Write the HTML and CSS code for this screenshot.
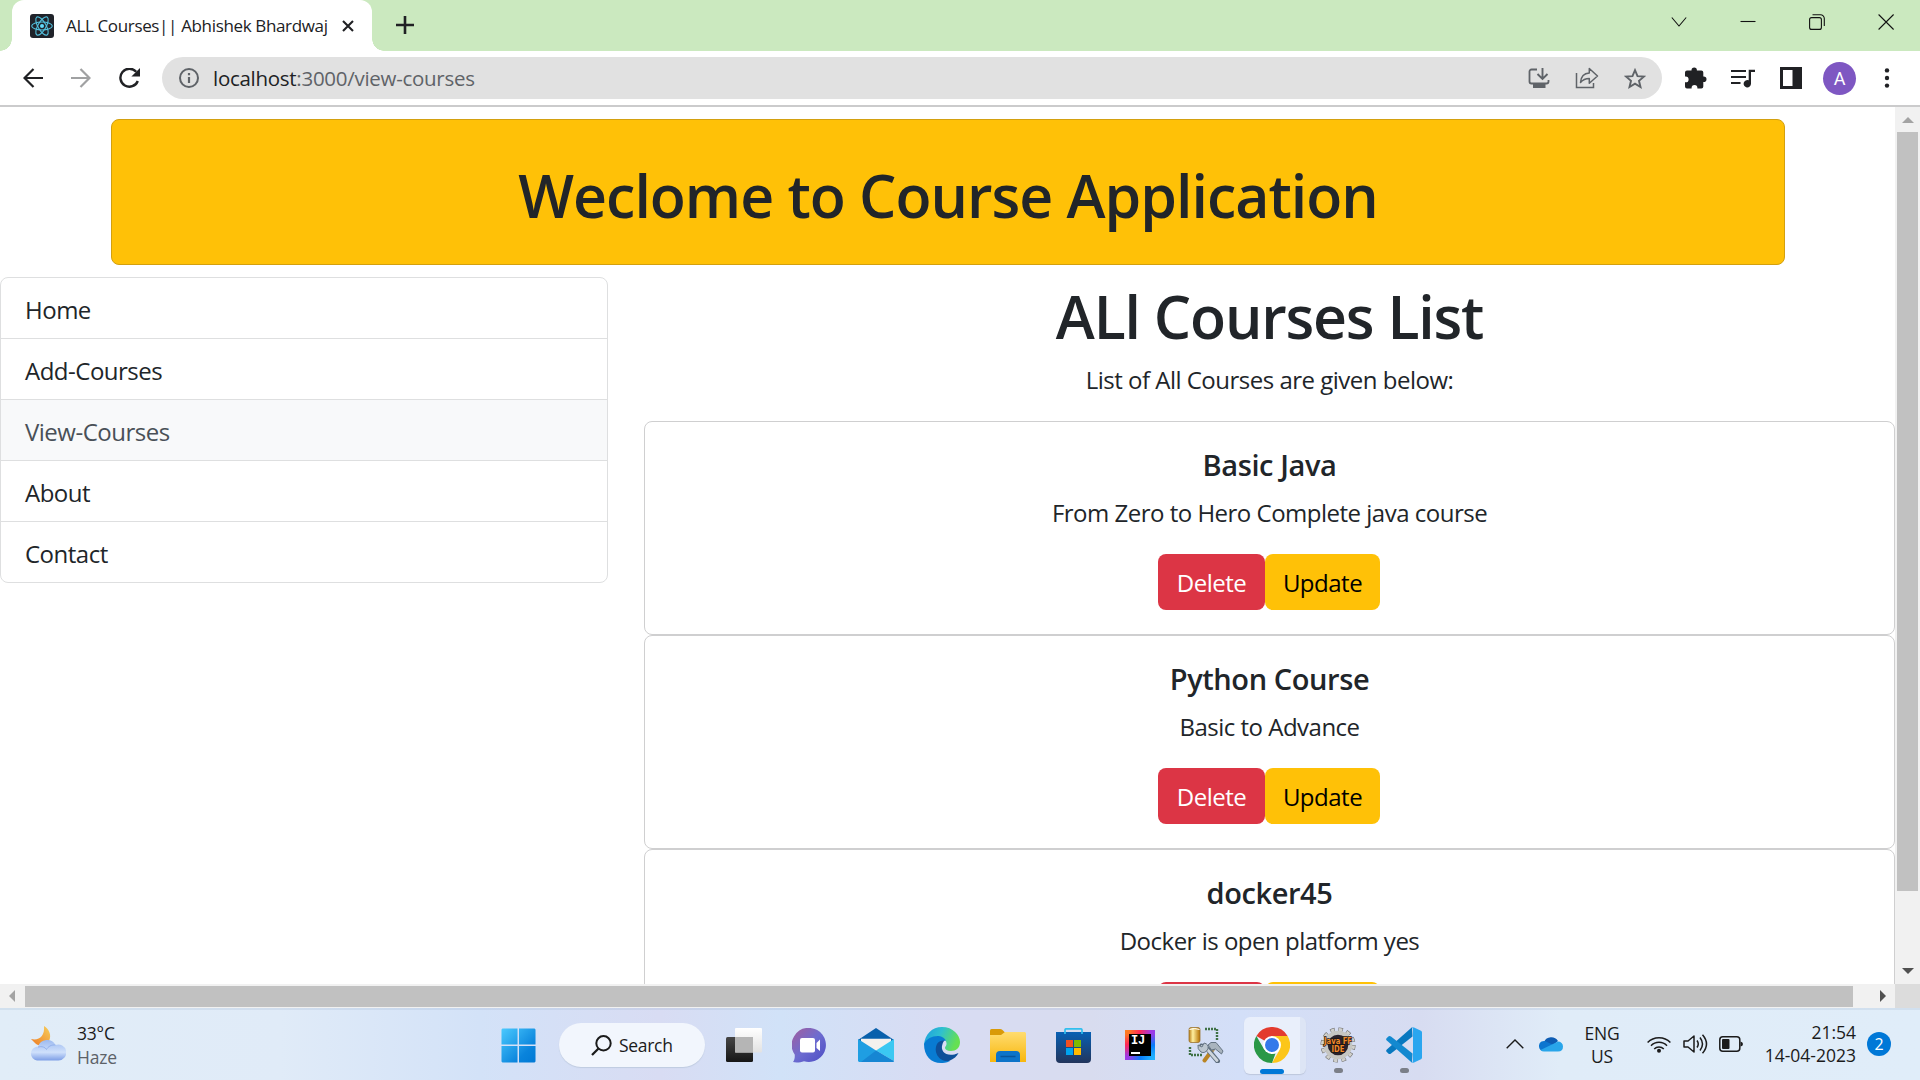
FILE: index.html
```html
<!DOCTYPE html>
<html lang="en">
<head>
<meta charset="utf-8">
<title>ALL Courses|| Abhishek Bhardwaj</title>
<link rel="stylesheet" href="styles.css">
</head>
<body>
<header class="tabstrip">
  <div class="tab">
    <svg class="favicon" width="24" height="24" viewBox="0 0 24 24"><rect width="24" height="24" rx="3" fill="#20232a"/><g fill="none" stroke="#53c1de" stroke-width="1.1"><ellipse cx="12" cy="12" rx="10.3" ry="4"/><ellipse cx="12" cy="12" rx="10.3" ry="4" transform="rotate(60 12 12)"/><ellipse cx="12" cy="12" rx="10.3" ry="4" transform="rotate(120 12 12)"/></g><circle cx="12" cy="12" r="2" fill="#61dafb"/></svg>
    <span class="tab-title">ALL Courses|| Abhishek Bhardwaj</span>
    <svg class="tab-close" width="12" height="12" viewBox="0 0 12 12"><path d="M1 1l10 10M11 1L1 11" stroke="#202124" stroke-width="2.1"/></svg>
  </div>
  <svg class="new-tab" width="18" height="18" viewBox="0 0 18 18"><path d="M9 0v18M0 9h18" stroke="#202124" stroke-width="2.6"/></svg>
  <div class="window-controls">
    <svg width="16" height="16" viewBox="0 0 16 16"><path d="M.8 3.500L8 12 15.200 3.500" /></svg>
    <svg width="16" height="16" viewBox="0 0 16 16"><path d="M.5 7.500h15"/></svg>
    <svg width="16" height="16" viewBox="0 0 16 16"><rect x=".6" y="3.600" width="11.800" height="11.800" rx="2"/><path d="M3.500.7h8a3.800 3.800 0 0 1 3.800 3.800v7.500"/></svg>
    <svg width="16" height="16" viewBox="0 0 16 16"><path d="M.6.5l15 15M15.600.5l-15 15"/></svg>
  </div>
</header>
<div class="toolbar">
  <div class="nav-buttons">
    <svg width="20" height="20" viewBox="0 0 20 20"><path d="M20 10H2M10.500 1L1.500 10l9 9" fill="none" stroke="#202124" stroke-width="2.200"/></svg>
    <svg width="20" height="20" viewBox="0 0 20 20"><path d="M0 10h18M9.500 1l9 9-9 9" fill="none" stroke="#a0a1a2" stroke-width="2.200"/></svg>
    <svg width="22" height="20" viewBox="0 0 22 20"><path d="M18.800 13a9 9 0 1 1-1.600-9.200" fill="none" stroke="#202124" stroke-width="2.400"/><path d="M21 0v8.600h-8.600z" fill="#202124"/></svg>
  </div>
  <div class="omnibox">
    <svg width="20" height="20" viewBox="0 0 20 20"><circle cx="10" cy="10" r="9" fill="none" stroke="#5f6368" stroke-width="2"/><path d="M10 9v6M10 5v2.200" stroke="#5f6368" stroke-width="2.200"/></svg>
    <span class="url"><b>localhost</b>:3000/view-courses</span>
    <div class="omni-actions">
      <svg width="22" height="20" viewBox="0 0 22 20"><path d="M9 1.500H3.500a2 2 0 0 0-2 2v10a2 2 0 0 0 2 2h15a2 2 0 0 0 2-2V12" fill="none" stroke="#5f6368" stroke-width="1.800"/><path d="M5 16h12.500v4H5z" fill="#5f6368"/><path d="M14.500 0v10M9.500 6l5 5 5-5" fill="none" stroke="#5f6368" stroke-width="1.900"/></svg>
      <svg width="24" height="22" viewBox="0 0 24 22"><path d="M1.500 6v14.500h17V16" fill="none" stroke="#5f6368" stroke-width="1.500"/><path d="M5.500 15.500C6 9.500 9 6.200 14.300 6V1.500L22.500 9l-8.200 7.200V11.500C10.500 11.500 8 12.500 5.500 15.500z" fill="none" stroke="#5f6368" stroke-width="1.500" stroke-linejoin="round"/></svg>
      <svg width="22" height="21" viewBox="0 0 22 21"><path d="M11 2.200l2.500 5.900 6.400.5-4.900 4.200 1.500 6.200L11 15.700 5.500 19 7 12.800 2.100 8.600l6.400-.5z" fill="none" stroke="#5f6368" stroke-width="1.900"/></svg>
    </div>
  </div>
  <div class="extensions">
    <svg width="22" height="22" viewBox="0 0 22 22"><path d="M0 5.500a2 2 0 0 1 2-2h4.500V3.200a2.700 2.700 0 0 1 5.400 0v.3h4.400a2 2 0 0 1 2 2v4h.4a2.800 2.800 0 0 1 0 5.600h-.4v4.400a2 2 0 0 1-2 2h-3.900v-.7a2.900 2.900 0 0 0-5.800 0v.7H2a2 2 0 0 1-2-2v-4.200h.7a2.900 2.900 0 0 0 0-5.800H0z" fill="#202124"/></svg>
    <svg width="24" height="19" viewBox="0 0 24 19"><path d="M0 2h15M0 8h15M0 14h9.500" stroke="#202124" stroke-width="2.200"/><path d="M24 .7V3h-4v11.800a3.700 3.700 0 1 1-2.300-3.500V.7z" fill="#202124"/></svg>
    <svg width="22" height="22" viewBox="0 0 22 22"><path d="M0 0h22v22H0zM3 3v16h9.500V3z" fill="#202124" fill-rule="evenodd"/></svg>
    <span class="avatar">A</span>
    <svg width="6" height="20" viewBox="0 0 6 20"><g fill="#202124"><circle cx="3" cy="2.400" r="2.200"/><circle cx="3" cy="10" r="2.200"/><circle cx="3" cy="17.600" r="2.200"/></g></svg>
  </div>
</div>
<div class="viewport">
  <main class="page">
    <div class="banner"><h1 class="headline">Weclome to Course Application</h1></div>
    <div class="columns">
      <nav class="menu">
        <a>Home</a>
        <a>Add-Courses</a>
        <a class="active">View-Courses</a>
        <a>About</a>
        <a>Contact</a>
      </nav>
      <section class="courses">
        <h1 class="list-title">ALl Courses List</h1>
        <p class="intro">List of All Courses are given below:</p>
        <article class="card"><h5>Basic Java</h5><p>From Zero to Hero Complete java course</p><div class="actions"><button class="btn danger">Delete</button><button class="btn warning">Update</button></div></article>
        <article class="card"><h5>Python Course</h5><p>Basic to Advance</p><div class="actions"><button class="btn danger">Delete</button><button class="btn warning">Update</button></div></article>
        <article class="card"><h5>docker45</h5><p>Docker is open platform yes</p><div class="actions"><button class="btn danger" aria-label="Delete"></button><button class="btn warning" aria-label="Update"></button></div></article>
      </section>
    </div>
  </main>
  <div class="vscroll"><i class="arrow up"></i><div class="vthumb"></div><i class="arrow down"></i></div>
  <div class="hscroll"><i class="arrow left"></i><div class="hthumb"></div><i class="arrow right"></i></div>
  <div class="corner"></div>
</div>
<footer class="taskbar">
  <div class="weather">
    <svg width="36" height="36" viewBox="0 0 36 36"><defs><linearGradient id="moon" x1="1" y1="0" x2="0" y2="1"><stop offset="0" stop-color="#f6cf5c"/><stop offset="1" stop-color="#ee7b23"/></linearGradient><linearGradient id="cloud" x1="0" y1="0" x2="0" y2="1"><stop offset="0" stop-color="#9dbaf0"/><stop offset=".6" stop-color="#cfe0fb"/><stop offset="1" stop-color="#7d9ee6"/></linearGradient></defs><path d="M14 0c5 3 8 9 5 15-3 5-11 6-14 2l-4-4c8 2 14-3 13-13z" fill="url(#moon)"/><path d="M7 34.500a7 7 0 0 1-.5-13.800h1.500a9.500 9.500 0 0 1 17.500-1.700 8 8 0 1 1 3 15.500z" fill="url(#cloud)"/><path d="M8 21c4-1 7 0 8.500 2.500 1.500-3 5-5 9-4.500" fill="none" stroke="#8aa9e8" stroke-width=".8"/></svg>
    <div class="weather-text"><span>33°C</span><span class="muted">Haze</span></div>
  </div>
  <div class="apps">
    <div class="app"><svg width="35" height="35" viewBox="0 0 36 36"><defs><linearGradient id="win" gradientUnits="userSpaceOnUse" x1="0" y1="0" x2="36" y2="36"><stop offset="0" stop-color="#4ccbff"/><stop offset=".7" stop-color="#0a84dc"/><stop offset="1" stop-color="#0078d4"/></linearGradient></defs><path d="M1.500.500H17v16.500H.500V1.500zM18.500.500H34.500l1 1V17H18.500zM.500 18.500H17V35.500H1.500l-1-1zM18.500 18.500h17v16l-1 1h-16z" fill="url(#win)"/></svg></div>
    <div class="search"><svg width="21" height="21" viewBox="0 0 21 21"><circle cx="12.500" cy="8.300" r="7.200" fill="none" stroke="#1b1b1b" stroke-width="2"/><path d="M7.500 13.500L1 20" stroke="#1b1b1b" stroke-width="2.300"/></svg><span>Search</span></div>
    <div class="app"><svg width="36" height="34" viewBox="0 0 36 34"><defs><linearGradient id="tv" x1="0" y1="0" x2="0" y2="1"><stop offset="0" stop-color="#464646"/><stop offset="1" stop-color="#161616"/></linearGradient><linearGradient id="tw" x1="0" y1="0" x2="0" y2="1"><stop offset="0" stop-color="#fff"/><stop offset="1" stop-color="#e2e2e2"/></linearGradient></defs><rect y="9" width="27" height="25" rx="1.500" fill="url(#tv)"/><rect x="9" width="27" height="24.500" rx="1" fill="url(#tw)"/><path d="M9 9h18v15.500H9z" fill="#b5b5b5"/></svg></div>
    <div class="app"><svg width="36" height="35" viewBox="0 0 36 35"><defs><linearGradient id="chat" x1="0" y1="0" x2="1" y2="1"><stop offset="0" stop-color="#a45d9c"/><stop offset=".5" stop-color="#6d6cd0"/><stop offset="1" stop-color="#4c4cc4"/></linearGradient></defs><path d="M18.500 0a17 17 0 1 1-6.500 33.200C8.500 34.300 4.500 35 1 34c1.500-2 2-5 1.700-7.500A17 17 0 0 1 18.500 0z" fill="url(#chat)"/><rect x="8" y="10" width="15" height="14.500" rx="2" fill="#fff"/><path d="M24.500 15l3.500-3.500v11.500l-3.500-3z" fill="#fff"/></svg></div>
    <div class="app"><svg width="36" height="34" viewBox="0 0 36 34"><path d="M0 12L18 0l18 12v3L18 25 0 15z" fill="#0860ac"/><path d="M3 10.800h30V16L18 26 3 16z" fill="#f4f1ee"/><path d="M36 11v22L18 22.500z" fill="#3bc8f2"/><path d="M0 11v22l1 1h34L18 22.500z" fill="#1f9ee2"/><path d="M18 22.500L36 33c0 1-1 1-2 1H3z" fill="#1686d3"/></svg></div>
    <div class="app"><svg width="36" height="36" viewBox="0 0 36 36"><defs><linearGradient id="edge" x1="0" y1="0" x2="1" y2=".3"><stop offset="0" stop-color="#1b9ee0"/><stop offset=".5" stop-color="#2fc0cf"/><stop offset="1" stop-color="#65e052"/></linearGradient></defs><path d="M0 18C1 7 8 0 18 0c11 0 18 8 18 15 0 6-4 9-9 9-4 0-6-1.500-6-3s1.800-2 1.500-5C21 8 8 7 0 18z" fill="url(#edge)"/><path d="M0 17C4 8 19 6 22 14c-5-1-8 3-8 8 0 7 6 12 12 12-4 2-7 2-9 2C7 36 0 29 0 17z" fill="#087bd2"/><path d="M13 17c-4 8 2 18 12 17 5-2 8-5 9.500-8-11 5-19-1-16-9 .5-2 1.500-3 2-3.500-3-.5-6 1-7.500 3.500z" fill="#0d4f99"/></svg></div>
    <div class="app"><svg width="36" height="33" viewBox="0 0 36 33"><defs><linearGradient id="fold" x1="0" y1="0" x2="0" y2="1"><stop offset="0" stop-color="#ffdc70"/><stop offset="1" stop-color="#f8b70d"/></linearGradient></defs><path d="M0 1.500Q0 0 1.500 0H10q1.500 0 2.500 1l3 3L11 8H0z" fill="#d99a08"/><path d="M0 6h11l4-3h20l1 1v29H0z" fill="url(#fold)"/><path d="M6 33v-7q0-4 4-4h16q4 0 4 4v7z" fill="#0d74c9"/><path d="M10.500 27.500h15" stroke="#09559b" stroke-width="1.500"/></svg></div>
    <div class="app store"><svg width="35" height="35" viewBox="0 0 35 35"><defs><linearGradient id="store" x1="0" y1="0" x2="0" y2="1"><stop offset="0" stop-color="#0860b4"/><stop offset="1" stop-color="#22355c"/></linearGradient></defs><path d="M0 4h35v27q0 4-4 4H4q-4 0-4-4z" fill="url(#store)"/><path d="M9 6V2q0-1.200 1.200-1.200h14.600Q26 .8 26 2v4" fill="none" stroke="#31bfee" stroke-width="1.700"/><path d="M10 12h7v7h-7z" fill="#f25022"/><path d="M18 12h7v7h-7z" fill="#7fba00"/><path d="M10 20h7v7h-7z" fill="#00a4ef"/><path d="M18 20h7v7h-7z" fill="#ffb900"/></svg></div>
    <div class="app"><div class="intellij">IJ<i></i></div></div>
    <div class="app"><svg width="36" height="36" viewBox="0 0 36 36"><defs><linearGradient id="db"><stop offset="0" stop-color="#b87b13"/><stop offset=".35" stop-color="#fff0a0"/><stop offset="1" stop-color="#b57000"/></linearGradient></defs><rect x="1" y=".5" width="11" height="15" rx="2" fill="url(#db)" stroke="#9a7431" stroke-width=".8"/><path d="M1.500 2.500q5-2 10 0" stroke="#fff" fill="none"/><path d="M17 2h12v11M2 20v8h12" fill="none" stroke="#3f7145" stroke-width="2.400" stroke-dasharray="2 1"/><path d="M16.500 33.500L25 22" stroke="#b98424" stroke-width="4" stroke-linecap="round"/><path d="M24 23l3-5" stroke="#8996a2" stroke-width="3.500"/><path d="M13.500 19l6 3 10 12" fill="none" stroke="#5e6e7e" stroke-width="5" stroke-linecap="round" stroke-linejoin="round"/><path d="M14 19.500l5.500 3 9.500 11" fill="none" stroke="#ced5dc" stroke-width="2.800" stroke-linecap="round"/><path d="M10 18l4 2 2-4q5 1 4 6-3 5-7 3-4-3-3-7z" fill="#bdc7d0" stroke="#667584"/><path d="M20 18l3-2.500h5l7 8.500-1.500 3-6-5-4 1z" fill="#a9b4be" stroke="#667584"/></svg></div>
    <div class="app current"><svg width="36" height="36" viewBox="0 0 36 36"><path d="M18 18L2.400 9A18 18 0 0 1 33.600 9z" fill="#e33b2e"/><path d="M18 9h15.600A18 18 0 0 1 18 36l7.800-13.500z" fill="#fcc61a"/><path d="M2.400 9l7.800 13.500L18 27l3.500-.5L18 36A18 18 0 0 1 2.400 9z" fill="#2a9847"/><circle cx="18" cy="18" r="9" fill="#fff"/><circle cx="18" cy="18" r="7" fill="#3579ea"/></svg></div>
    <div class="app running"><svg class="javaff" width="36" height="36" viewBox="0 0 36 36"><circle cx="18" cy="18" r="15.800" fill="none" stroke="#6e6e6c" stroke-width="3.500" stroke-dasharray="4.500 3.770"/><circle cx="18" cy="18" r="15.500" fill="none" stroke="#d0d0cc" stroke-width="3" stroke-dasharray="3.500 4.610" stroke-dashoffset="-.5"/><circle cx="18" cy="18" r="12.300" fill="#29222b" stroke="#c6c6c2" stroke-width="4"/><text x="18" y="16.500" class="java-label" textLength="28" lengthAdjust="spacingAndGlyphs">Java FF</text><text x="18" y="24.500" class="java-label" textLength="13" lengthAdjust="spacingAndGlyphs">IDE</text></svg></div>
    <div class="app running"><svg width="36" height="36" viewBox="0 0 36 36"><path d="M26.500 9.500L5 26.500q-1.500 1-2.700 0L.600 24.800q-1-1.200.2-2.400L26 .200z" fill="#0878bf"/><path d="M26.500 26.500L5 9.500q-1.500-1-2.700 0L.600 11.200q-1 1.200.2 2.400L26 35.800z" fill="#1389d0"/><path d="M26 .200Q27 0 28 .500l7 3.300q1 .5 1 1.700v25q0 1.200-1 1.700l-7 3.300q-1 .5-2 .3 1-.8 1-2.500V2.700Q27 1 26 .200z" fill="#2aa6ef"/></svg></div>
  </div>
  <div class="tray">
    <svg class="chev" width="18" height="10" viewBox="0 0 18 10"><path d="M.700 9.300L9 1l8.300 8.300" fill="none" stroke="#1b1b1b" stroke-width="1.400"/></svg>
    <svg class="onedrive" width="24" height="16" viewBox="0 0 24 16"><path d="M5 6a8 8 0 0 1 14-1l-8 7-8-2z" fill="#0d5cb3"/><path d="M0 10.500A5 5 0 0 1 8 6l11 5-9 4H4.500A4.500 4.500 0 0 1 0 10.500z" fill="#0c75cf"/><path d="M19 5.500a5 5 0 0 1 5 5q0 5-5 5H5q-2 0-3.500-1.500L14 8z" fill="#28a5ea"/></svg>
    <div class="lang"><span>ENG</span><span>US</span></div>
    <svg class="wifi" width="24" height="17" viewBox="0 0 24 17"><g fill="none" stroke="#1b1b1b" stroke-width="1.500"><path d="M.6 6.500a15.800 15.800 0 0 1 22.800 0M4 9.700a11 11 0 0 1 16 0M7.200 13a6.700 6.700 0 0 1 9.600 0"/></g><circle cx="12" cy="14.700" r="2" fill="#1b1b1b"/></svg>
    <svg class="sound" width="25" height="20" viewBox="0 0 25 20"><g fill="none" stroke="#1b1b1b" stroke-width="1.500" stroke-linejoin="round"><path d="M1 7v6h4l6 5V2L5 7z"/><path d="M14 6.500q2.500 3.500 0 7M17 3.500q5 6.500 0 13M19.500.7q8 9.300 0 18.600"/></g></svg>
    <svg class="battery" width="24" height="16" viewBox="0 0 24 16"><rect x=".8" y=".8" width="20" height="14.400" rx="3" fill="none" stroke="#1b1b1b" stroke-width="1.500"/><rect x="3" y="3" width="7.500" height="10" rx="1" fill="#1b1b1b"/><path d="M21.500 5.500q2.500.5 2.500 2.500t-2.500 2.500z" fill="#1b1b1b"/></svg>
    <div class="clock"><span>21:54</span><span>14-04-2023</span></div>
    <span class="badge">2</span>
  </div>
</footer>
</body>
</html>
```
FILE: styles.css
```css
* { box-sizing: border-box; }
body { margin: 0; width: 1920px; height: 1080px; overflow: hidden; display: flex; flex-direction: column; background: #fff; color: #212529; font-family: "Open Sans", "Noto Sans", sans-serif; font-size: 24px; letter-spacing: -.5px; }
svg { display: block; flex: none; }
h1, h5, p { margin: 0; white-space: nowrap; }

.tabstrip { height: 51px; flex: none; display: flex; align-items: flex-start; background: #cbe9bf; padding-left: 12px; }
.tab { position: relative; width: 360px; height: 51px; flex: none; display: flex; align-items: center; padding: 0 18px; background: #fff; border-radius: 12px 12px 0 0; }
.tab::before, .tab::after { content: ""; position: absolute; bottom: 0; width: 12px; height: 12px; }
.tab::before { left: -12px; background: radial-gradient(circle at 0 0, transparent 11.5px, #fff 12px); }
.tab::after { right: -12px; background: radial-gradient(circle at 100% 0, transparent 11.5px, #fff 12px); }
.tab-title { width: 264px; margin-left: 12px; padding-bottom: 1px; font-size: 17px; letter-spacing: -.35px; color: #202124; white-space: nowrap; }
.tab-close { margin-left: 12px; }
.new-tab { margin: 16px 0 0 24px; }
.window-controls { margin: 14px 26px 0 auto; display: flex; gap: 53px; }
.window-controls svg { fill: none; stroke: #111; stroke-width: 1.1; }

.toolbar { height: 56px; flex: none; display: flex; align-items: center; border-bottom: 2px solid #cbcbcc; background: #fff; }
.nav-buttons { width: 162px; display: flex; gap: 28px; padding-left: 23px; }
.omnibox { width: 1500px; height: 42px; border-radius: 21px; background: #e1e1e1; display: flex; align-items: center; padding: 0 16px 0 17px; }
.url { margin-left: 14px; font-size: 20.5px; letter-spacing: -.28px; color: #5f6368; white-space: nowrap; }
.url b { font-weight: 400; color: #202124; }
.omni-actions { margin-left: auto; display: flex; align-items: center; gap: 25px; }
.extensions { flex: 1; display: flex; align-items: center; padding-left: 23px; }
.extensions svg:nth-child(2) { margin-left: 24px; }
.extensions svg:nth-child(3) { margin-left: 25px; }
.avatar { width: 33px; height: 33px; border-radius: 50%; margin: 0 28px 0 21px; background: #7e57c2; color: #fff; font-family: Roboto, sans-serif; font-size: 18px; letter-spacing: 0; line-height: 34px; text-align: center; }

.viewport { height: 901px; flex: none; display: grid; grid-template: 877px 24px / 1895px 25px; }
.page { overflow: hidden; padding-top: 12px; }
.banner { width: 1674px; height: 146px; margin-left: 111px; display: flex; justify-content: center; background: #ffc107; border: 1px solid #d3a00f; border-radius: 8px; }
.headline, .list-title { font-size: 59px; font-weight: 600; line-height: 75px; letter-spacing: -1px; text-align: center; }
.headline { margin-top: 38px; }
.list-title { padding-top: 2px; height: 75px; letter-spacing: -1.2px; }
.columns { display: flex; align-items: flex-start; gap: 36px; margin-top: 12px; }
.menu { width: 608px; height: 306px; border: 1px solid #dedfe0; border-radius: 8px; overflow: hidden; }
.menu a { display: block; height: 61px; line-height: 63px; padding-left: 24px; border-bottom: 1px solid #dedfe0; }
.menu a:last-child { border-bottom: 0; }
.menu .active { background: #f8f9fa; color: #495057; }
.courses { width: 1251px; text-align: center; }
.intro { line-height: 38px; margin: 9px 0 22px; }
.card { height: 214px; padding: 24px; border: 1px solid #cfcfd0; border-radius: 8px; background: #fff; }
.card h5 { font-size: 29px; font-weight: 600; line-height: 38px; letter-spacing: -.4px; }
.card p { line-height: 38px; margin-top: 10px; }
.actions { display: flex; justify-content: center; margin-top: 22px; padding-right: 1px; }
.btn { height: 56px; border: 0; padding: 1px 0 0; border-radius: 8px; font: inherit; letter-spacing: -.5px; }
.danger { width: 107px; background: #dc3545; color: #fff; }
.warning { width: 115px; background: #ffc107; color: #000; }

.vscroll { background: #f1f1f1; display: flex; flex-direction: column; align-items: center; }
.vthumb { width: 21px; height: 759px; background: #c1c1c1; margin-top: 9px; }
.hscroll { background: #f1f1f1; display: flex; align-items: center; }
.hthumb { width: 1828px; height: 21px; background: #c1c1c1; margin-left: 10px; }
.corner { background: #dcdcdc; }
.arrow { width: 0; height: 0; border: 6px solid transparent; }
.up { border-top: 0; border-bottom-color: #a3a3a3; margin-top: 10px; }
.down { border-bottom: 0; border-top-color: #505050; margin-top: 77px; }
.left { border-left: 0; border-right-color: #a3a3a3; margin-left: 9px; }
.right { border-right: 0; border-left-color: #505050; margin-left: 27px; }

.taskbar { height: 72px; flex: none; display: flex; align-items: center; background: linear-gradient(90deg, #e1edf8 0, #e0ebf8 280px, #d3e2f8 480px, #d8dcf3 660px, #d1e2f8 780px, #d8dcf3 940px, #d8dcef 1090px, #d3dff8 1240px, #d7dcf1 1420px, #e0ecf8 1560px, #e0edf9 100%); box-shadow: inset 0 2px rgba(130,155,185,.16); font-size: 17.5px; letter-spacing: -.2px; color: #1b1b1b; }
.weather { width: 485px; display: flex; align-items: center; gap: 11px; padding-left: 30px; }
.weather-text { display: flex; flex-direction: column; padding-top: 2px; line-height: 24px; align-items: flex-start; }
.muted { color: #5c6268; }
.apps { width: 952px; display: flex; align-items: center; }
.app { position: relative; width: 66px; height: 72px; display: flex; align-items: center; justify-content: center; padding-top: 2px; }
.store { padding-right: 1px; }
.search { width: 146px; height: 44px; margin: 2px 6px 0 8px; border-radius: 22px; background: #f2f6fd; box-shadow: 0 1px 1px #bfcbe0; display: flex; align-items: center; padding-left: 32px; gap: 7px; letter-spacing: -.3px; }
.intellij { width: 30px; height: 30px; border: 4px solid; border-image: linear-gradient(135deg, #fc801d, #fe2857 25%, #9b3be8 50%, #087cfa 75%, #22b4ff) 1; background: #000; color: #fff; font: 700 12px/14px "Liberation Mono", monospace; text-align: left; padding-left: 2px; }
.intellij i { display: block; width: 9px; height: 2px; background: #fff; margin-top: 4px; }
.current::before { content: ""; position: absolute; left: 5px; top: 9px; width: 56px; height: 57px; border-radius: 6px; background: #e9effb; border-right: 6px solid #dde5f5; box-shadow: 0 1px 1px #bdc7dc; }
.current svg { position: relative; }
.current::after, .running::after { content: ""; position: absolute; bottom: 7px; left: 29px; width: 9px; height: 5px; border-radius: 3px; background: #7b7f88; }
.current::after { left: 21px; width: 24px; background: #0078d7; bottom: 6px; }
.javaff { overflow: visible; }
.java-label { font: 700 8.5px "DejaVu Sans", sans-serif; letter-spacing: 0; text-anchor: middle; fill: #f28a2c; stroke: #1c1510; stroke-width: 1.4px; paint-order: stroke; }
.tray { flex: 1; display: flex; align-items: center; padding-left: 69px; }
.onedrive { margin-left: 15px; }
.lang { width: 36px; margin-left: 21px; display: flex; flex-direction: column; align-items: center; padding-top: 1px; line-height: 23px; }
.wifi { margin-left: 27px; }
.sound { margin-left: 12px; }
.battery { margin-left: 11px; }
.clock { width: 113px; display: flex; flex-direction: column; align-items: flex-end; line-height: 23px; letter-spacing: 0; white-space: nowrap; }
.badge { width: 24px; height: 24px; margin-left: 11px; border-radius: 50%; background: #0078d7; color: #fff; font-size: 16px; line-height: 24px; text-align: center; }
```
